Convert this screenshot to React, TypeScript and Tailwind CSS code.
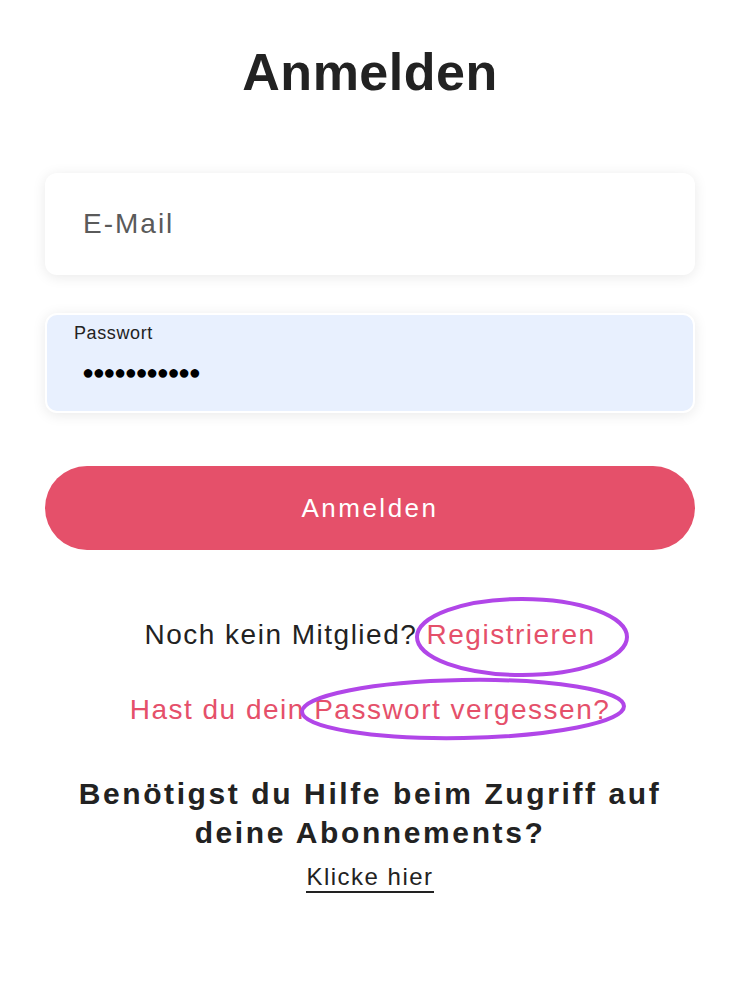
import React from "react";

const font = { fontFamily: '"Liberation Sans", Arial, sans-serif' };

export default function App() {
  return (
    <div className="relative min-h-[984px] w-[744px] bg-white text-[#222]" style={font}>
      <div className="flex flex-col items-center pl-[45px] pr-[49px] pt-[46px]">
        <h1 className="text-[52px] font-bold leading-none tracking-[0.5px] text-[#222]">Anmelden</h1>

        {/* E-Mail */}
        <div className="mt-[75px] flex h-[102px] w-full items-center rounded-[12px] bg-white pl-[38px] shadow-[0_2px_14px_rgba(0,0,0,0.09)]">
          <span className="text-[28px] tracking-[2px] text-[#5a5a5a]">E-Mail</span>
        </div>

        {/* Passwort (autofilled) */}
        <div className="mt-[38px] flex h-[100px] w-full flex-col rounded-[12px] border-2 border-white bg-[#e8f0fe] pl-[27px] pt-[7px] shadow-[0_2px_14px_rgba(0,0,0,0.09)]">
          <span className="text-[18px] leading-[22px] tracking-[0.6px] text-[#222]">Passwort</span>
          <span className="mt-[16px] pl-[8px] text-[20px] leading-[24px] tracking-[-1.4px] text-black">●●●●●●●●●●●</span>
        </div>

        <button className="mt-[53px] flex h-[84px] w-full items-center justify-center rounded-full bg-[#e5506a] text-[26px] tracking-[2.5px] text-white">
          Anmelden
        </button>

        <p className="mt-[67px] text-[28px] leading-[36px] tracking-[1.5px] text-[#222]">
          Noch kein Mitglied? <span className="text-[#e5506a]">Registrieren</span>
        </p>
        <p className="mt-[39px] text-[28px] leading-[36px] tracking-[1.5px] text-[#e5506a]">
          Hast du dein Passwort vergessen?
        </p>

        <h2 className="mt-[46px] text-center text-[30px] font-bold leading-[39px] tracking-[2.6px] text-[#222]">
          Benötigst du Hilfe beim Zugriff auf
          <br />
          deine Abonnements?
        </h2>
        <a className="mt-[11px] border-b-2 border-[#222] text-[24px] leading-[28px] tracking-[1.5px] text-[#222]">
          Klicke hier
        </a>
      </div>

      {/* annotation ellipses */}
      <svg className="pointer-events-none absolute left-0 top-0" width="744" height="984">
        <ellipse cx="522" cy="637" rx="105" ry="38" fill="none" stroke="#b146e8" strokeWidth="4" />
        <ellipse cx="463" cy="709" rx="161" ry="29" fill="none" stroke="#b146e8" strokeWidth="4" transform="rotate(-1 463 709)" />
      </svg>
    </div>
  );
}
